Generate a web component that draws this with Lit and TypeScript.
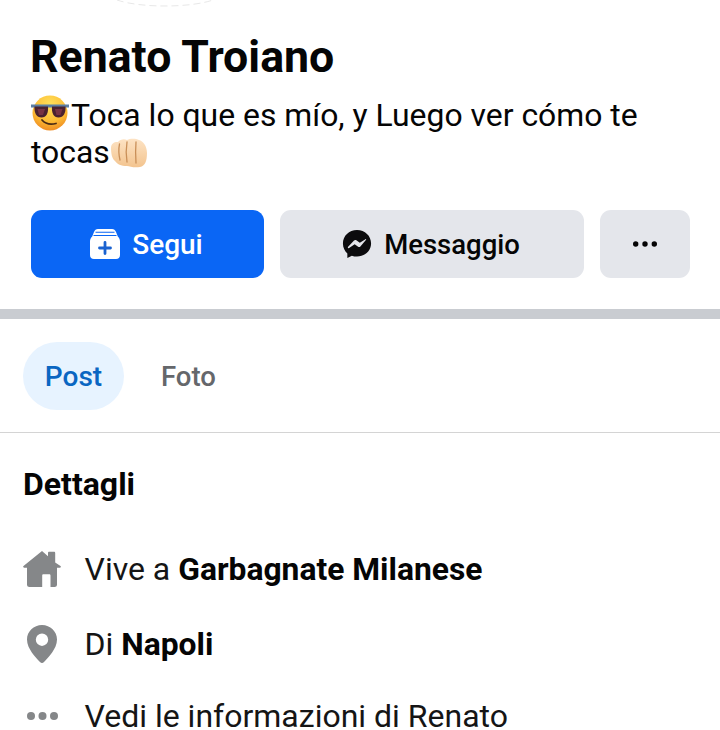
import { LitElement, html, css, svg } from "lit";
import { customElement } from "lit/decorators.js";

const cool = html`<svg class="emoji" viewBox="0 0 38 36" aria-hidden="true">
  <defs><radialGradient id="f" cx="50%" cy="25%" r="80%"><stop offset="0" stop-color="#ffe05a"/><stop offset=".6" stop-color="#fdbd35"/><stop offset="1" stop-color="#ec8420"/></radialGradient></defs>
  <circle cx="19" cy="18" r="17.500" fill="url(#f)"/>
  <path d="M0 9.500 L38 9.500 L38 12.500 L0 12.500Z" fill="#5b7ea3"/>
  <path d="M3.500 11.500 H17 C17.500 18 15.500 22.500 10.500 22.500 C5.500 22.500 3 18 3.500 11.500Z" fill="#4a2230"/>
  <path d="M21 11.500 H34.500 C35 18 32.500 22.500 27.500 22.500 C22.500 22.500 20.500 18 21 11.500Z" fill="#4a2230"/>
  <path d="M6.500 14 H14 L12 20 H8Z" fill="#8a3a4c" opacity=".7"/>
  <path d="M24 14 H31.500 L29.500 20 H25.500Z" fill="#8a3a4c" opacity=".7"/>
  <path d="M11 25 C14 28.500 19 30 25 28.500" fill="none" stroke="#4a2b14" stroke-width="1.800" stroke-linecap="round"/>
</svg>`;

const fist = html`<svg class="emoji fist" viewBox="0 0 38 30" aria-hidden="true">
  <defs><linearGradient id="s" x1="0" y1="0" x2="0" y2="1"><stop offset="0" stop-color="#fde3c4"/><stop offset="1" stop-color="#f3c48f"/></linearGradient></defs>
  <path d="M1 10 C1 5 5 3.500 8 4 C10 1.500 14 .5 17 2 C20 .3 26 .3 29 2 C33 3 37 8 37 15 C37 23 35 28 30 29 C24 30 20 28.500 17 28 C11 28 7 26 5 23 C2 21 1 15 1 10Z" fill="url(#s)"/>
  <g fill="none" stroke="#c98f58" stroke-width="1.300" stroke-linecap="round">
    <path d="M9.500 6 C8.500 11 8.800 17 10 22"/><path d="M17 4 C16 10 16 18 17 24"/><path d="M26 4 C25.500 10 25.500 18 26 25"/>
  </g>
</svg>`;

const follow = html`<svg class="btn-icon" viewBox="0 0 30 30" aria-hidden="true">
  <path fill="#fff" d="M8 0 H22 C24 0 25.200 1 26 3 L27.800 7.500 C29.200 8.800 30 10.500 30 12.500 V26 C30 28.500 28.500 30 26 30 H4 C1.500 30 0 28.500 0 26 V12.500 C0 10.500 .8 8.800 2.200 7.500 L4 3 C4.800 1 6 0 8 0Z"/>
  <path fill="none" stroke="#0a66f5" stroke-width="1.100" d="M5.500 3.200 H24.500 M3.500 6.500 H26.500"/>
  <path fill="none" stroke="#1a62d0" stroke-width="2.800" stroke-linecap="round" d="M15 13.500 V24.500 M9.500 19 H20.500"/>
</svg>`;

const messenger = html`<svg class="btn-icon" viewBox="0 0 32 32" aria-hidden="true">
  <path fill="#0b0b0d" d="M16 1 C7.500 1 1 7.200 1 15.500 C1 19.800 2.800 23.500 5.700 26 V31 L10.500 28.400 C12.200 29 14 29.300 16 29.300 C24.500 29.300 31 23.100 31 15.500 C31 7.200 24.500 1 16 1Z"/>
  <path fill="#e4e6eb" d="M6.300 19.300 L12.800 12.300 C13.500 11.600 14.500 11.500 15.300 12 L19 14.700 L25 10.800 C25.500 10.500 26 11.100 25.700 11.500 L19.600 18.700 C19 19.400 18 19.500 17.200 19 L13.500 16.200 L7.200 20.400 C6.600 20.700 6 20 6.300 19.300Z"/>
</svg>`;

const dots = (c: string, w: number, h: number, r: number) => html`<svg style="width:${w}px;height:${h}px" viewBox="0 0 ${w} ${h}" aria-hidden="true">
  ${[r, w / 2, w - r].map((x) => svg`<circle cx=${x} cy=${h / 2} r=${r} fill=${c}/>`)}
</svg>`;

const home = html`<svg class="row-icon home" viewBox="0 0 38 36" aria-hidden="true">
  <path fill="#858789" d="M19 0 L25 5.200 V2 C25 1.300 25.500 .8 26.200 .8 H31 C31.700 .8 32.200 1.300 32.200 2 V11.500 L37.500 15 C38.300 15.800 37.800 16.800 36.800 16.800 H34 V33.500 C34 35.200 33 36 31.500 36 H27.500 V24.500 C27.500 23.700 27 23.200 26.200 23.200 H20.500 C19.700 23.200 19.200 23.700 19.200 24.500 V36 H6.500 C5 36 4 35.200 4 33.500 V16.800 H1.200 C.2 16.800 -.3 15.800 .5 15Z"/>
</svg>`;

const pin = html`<svg class="row-icon pin" viewBox="0 0 30 38" aria-hidden="true">
  <path fill="#858789" fill-rule="evenodd" d="M15 0 C6.700 0 0 6.500 0 14.500 C0 24 9 32.500 13 37 C14.200 38.300 15.800 38.300 17 37 C21 32.500 30 24 30 14.500 C30 6.500 23.300 0 15 0Z M15 8.500 A6.200 6.200 0 1 1 15 20.900 A6.200 6.200 0 1 1 15 8.500Z"/>
</svg>`;

@customElement("app-root")
export class AppRoot extends LitElement {
  static styles = css`
    :host { display: block; width: 720px; height: 730px; overflow: hidden; background: #fff; font-family: Roboto, sans-serif; color: #050505; }
    .arc { display: block; width: 100px; height: 7px; margin-left: 115px; }
    .head { padding: 27px 30px 0 31px; }
    h1 { margin: 0 0 0 -1px; font-size: 44.650px; line-height: 47px; font-weight: 700; }
    .bio { margin: 14px 0 0 0; font-size: 31.900px; line-height: 37px; font-weight: 400; }
    .bio .lead { margin-right: 2px; }
    .emoji { display: inline-block; width: 38px; height: 36px; vertical-align: -5px; }
    .fist { width: 38px; height: 30px; vertical-align: -5px; }
    .actions { display: flex; gap: 16px; margin-top: 39px; }
    .btn { height: 68px; border-radius: 11px; display: flex; align-items: center; justify-content: center; gap: 12px; font-size: 27.500px; font-weight: 500; background: #e4e6eb; color: #050505; }
    .follow { width: 233px; background: #0a66f5; color: #fff; font-size: 28px; padding-right: 2px; box-sizing: border-box; }
    .msg { width: 304px; padding-right: 2px; box-sizing: border-box; }
    .more { width: 90px; }
    .btn-icon { width: 30px; height: 30px; display: block; }
    .sep { height: 10px; background: #c9ccd1; margin-top: 31px; }
    .tabs { display: flex; align-items: center; padding: 23px 0 22px 23px; border-bottom: 1px solid #d4d4d4; }
    .tab { height: 68px; display: flex; align-items: center; font-size: 27.500px; font-weight: 500; color: #65676b; }
    .tab.on { width: 101px; justify-content: center; background: #e7f3ff; color: #0a66c2; border-radius: 34px; font-size: 28px; }
    .foto { margin-left: 37px; }
    .details { padding: 34px 0 0 23px; }
    h2 { margin: 0; font-size: 32px; line-height: 34px; font-weight: 700; }
    .rows { margin-top: 49px; display: flex; flex-direction: column; }
    .row { display: flex; align-items: center; height: 38px; font-size: 32px; font-weight: 400; color: #151515; }
    .row + .row { margin-top: 37px; }
    .row + .row + .row { margin-top: 34px; }
    .row b { font-weight: 700; color: #050505; font-size: 31.800px; }
    .slot { width: 61.500px; display: flex; align-items: center; flex: none; }
    .home { width: 38px; height: 36px; display: block; }
    .pin { width: 30px; height: 38px; margin-left: 4px; display: block; }
    .dots { margin-left: 4px; display: flex; }
  `;

  render() {
    return html`
      <svg class="arc" viewBox="0 0 100 7" aria-hidden="true"><path d="M2 0 C25 8 75 8 98 0" fill="none" stroke="#e8e8e8" stroke-width="1" stroke-dasharray="7 4"/></svg>
      <div class="head">
        <h1>Renato Troiano</h1>
        <p class="bio"><span class="lead">${cool}</span>Toca lo que es mío, y Luego ver cómo te tocas${fist}</p>
        <div class="actions">
          <div class="btn follow">${follow}<span>Segui</span></div>
          <div class="btn msg">${messenger}<span>Messaggio</span></div>
          <div class="btn more">${dots("#050505", 24, 6, 2.7)}</div>
        </div>
      </div>
      <div class="sep"></div>
      <div class="tabs">
        <div class="tab on">Post</div>
        <div class="tab foto">Foto</div>
      </div>
      <div class="details">
        <h2>Dettagli</h2>
        <div class="rows">
          <div class="row"><span class="slot">${home}</span><span>Vive a <b>Garbagnate Milanese</b></span></div>
          <div class="row"><span class="slot">${pin}</span><span>Di <b>Napoli</b></span></div>
          <div class="row"><span class="slot"><span class="dots">${dots("#858789", 31, 8, 4)}</span></span><span>Vedi le informazioni di Renato</span></div>
        </div>
      </div>
    `;
  }
}
